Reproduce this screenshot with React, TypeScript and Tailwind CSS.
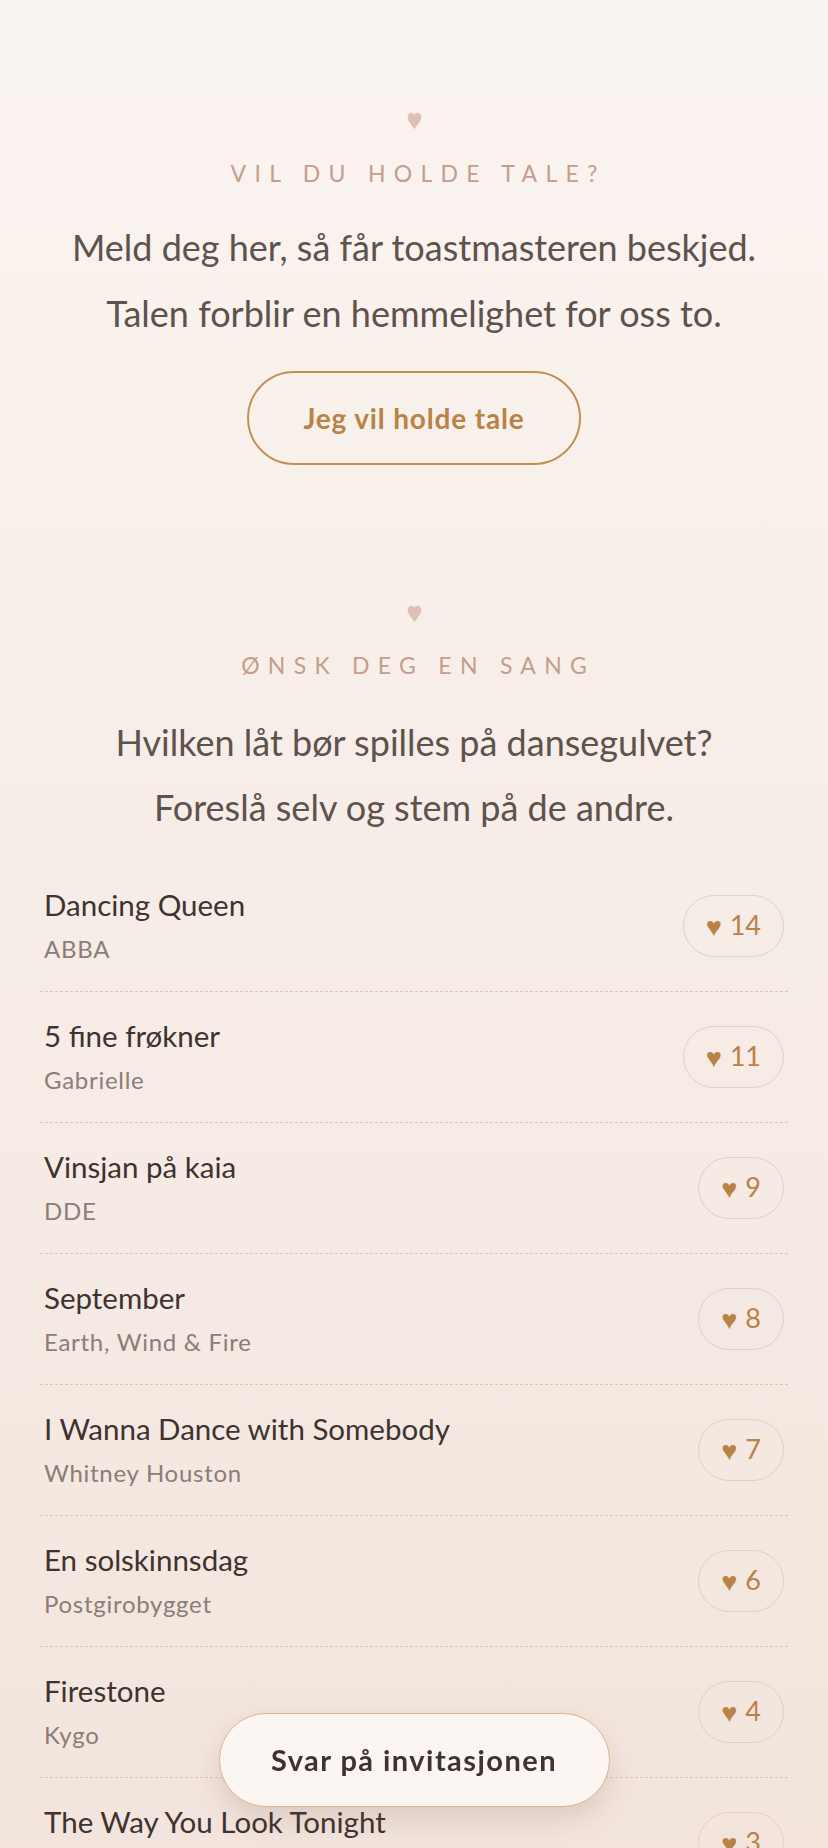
import React from 'react';

const FONT = 'font-["Lato","Liberation_Sans",sans-serif]';

const songs = [
  { title: 'Dancing Queen', artist: 'ABBA', votes: 14 },
  { title: '5 fine frøkner', artist: 'Gabrielle', votes: 11 },
  { title: 'Vinsjan på kaia', artist: 'DDE', votes: 9 },
  { title: 'September', artist: 'Earth, Wind & Fire', votes: 8 },
  { title: 'I Wanna Dance with Somebody', artist: 'Whitney Houston', votes: 7 },
  { title: 'En solskinnsdag', artist: 'Postgirobygget', votes: 6 },
  { title: 'Firestone', artist: 'Kygo', votes: 4 },
  { title: 'The Way You Look Tonight', artist: 'Frank Sinatra', votes: 3 },
  { title: 'Shut Up and Dance', artist: 'Walk the Moon', votes: 2 },
];

function SmallHeart() {
  return (
    <div className="h-[20px] flex items-center justify-center">
      <svg width="15" height="18" viewBox="0 0 15 18" className="text-[#dfc0b6]">
        <path
          d="M7.5 17.5 C6.6 14.6 0.6 9.6 0.6 5.2 C0.6 2.6 2.4 0.8 4.4 0.8 C5.9 0.8 7 1.8 7.5 3 C8 1.8 9.1 0.8 10.6 0.8 C12.6 0.8 14.4 2.6 14.4 5.2 C14.4 9.6 8.4 14.6 7.5 17.5 Z"
          fill="currentColor"
        />
      </svg>
    </div>
  );
}

function Eyebrow({ children, className = '' }: { children: React.ReactNode; className?: string }) {
  return (
    <h3 className={`text-[23px] leading-[30px] tracking-[0.36em] pl-[0.36em] uppercase text-[#c49e8b] ${className}`}>
      {children}
    </h3>
  );
}

export default function App() {
  return (
    <div className={`${FONT} min-h-screen bg-gradient-to-b from-[#faf4f0] via-[#f6ebe5] to-[#f1e2da] text-[#5e524d]`}>
      {/* Tale */}
      <section className="pt-[111px] flex flex-col items-center text-center">
        <SmallHeart />
        <Eyebrow className="mt-[27px]">Vil du holde tale?</Eyebrow>
        <p className="mt-[26px] text-[36px] leading-[66px] text-[#5e524d]">
          Meld deg her, så får toastmasteren beskjed.
          <br />
          Talen forblir en hemmelighet for oss to.
        </p>
        <button className="mt-[25px] w-[334px] h-[94px] rounded-full border-2 border-[#c48f55] text-[#b98348] text-[28px] font-bold tracking-[0.03em]">
          Jeg vil holde tale
        </button>
      </section>

      {/* Sangønsker */}
      <section className="mt-[139px] flex flex-col items-center text-center">
        <SmallHeart />
        <Eyebrow className="mt-[26px]">Ønsk deg en sang</Eyebrow>
        <p className="mt-[30px] text-[36px] leading-[65px] text-[#5e524d]">
          Hvilken låt bør spilles på dansegulvet?
          <br />
          Foreslå selv og stem på de andre.
        </p>
      </section>

      <ul className="mt-[21px] mx-[40px] pb-[160px]">
        {songs.map((s) => (
          <li
            key={s.title}
            className="flex items-center justify-between px-[4px] pt-[24px] pb-[25px] border-b border-dashed border-[#dcc6ba]"
          >
            <div>
              <div className="text-[29.5px] leading-[40px] text-[#3d3330]">{s.title}</div>
              <div className="mt-[7px] text-[24px] leading-[34px] tracking-[0.03em] text-[#8b7d77]">{s.artist}</div>
            </div>
            <button className="h-[62px] px-[22px] rounded-full border-[1.5px] border-[#e4cfc5] text-[#b98348] text-[27px] flex items-center gap-[8px]">
              <span className="text-[27px] leading-none">♥</span>
              <span>{s.votes}</span>
            </button>
          </li>
        ))}
      </ul>

      <div className="fixed inset-x-0 bottom-[41px] flex justify-center">
        <button className="w-[391px] h-[94px] rounded-full bg-[#fcf6f2] border-[1.5px] border-[#d9b48c] shadow-[0_12px_30px_rgba(120,80,60,0.18)] text-[29px] font-bold tracking-[0.05em] text-[#3d3330]">
          Svar på invitasjonen
        </button>
      </div>
    </div>
  );
}
